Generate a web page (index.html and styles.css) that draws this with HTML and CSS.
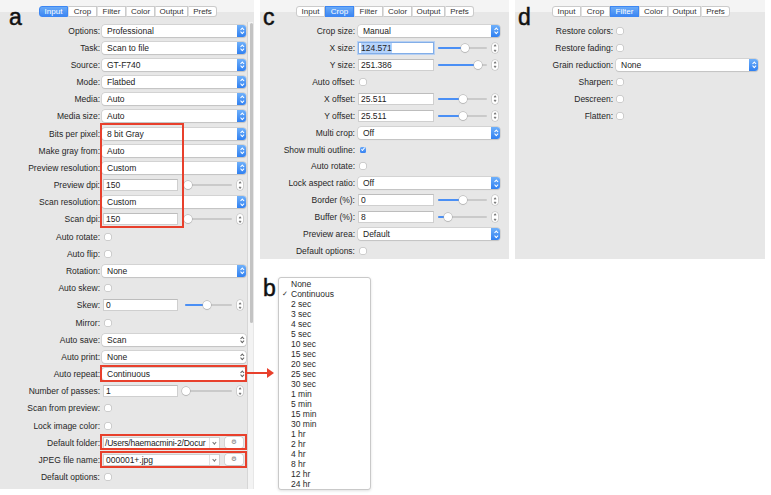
FILE: index.html
```html
<!DOCTYPE html>
<html>
<head>
<meta charset="utf-8">
<title>Scanner settings</title>
<link rel="stylesheet" href="styles.css">
</head>
<body>
<div class="figure">

  <!-- a: Input tab -->
  <div class="panel panelA">
    <span class="tag">a</span>
    <div class="tabs tabsA">
      <span class="tab on">Input</span><span class="tab">Crop</span><span class="tab">Filter</span><span class="tab">Color</span><span class="tab wide">Output</span><span class="tab">Prefs</span>
    </div>
    <div class="body">
      <div class="rows rowsA">
        <div class="row"><span class="lbl">Options:</span><div class="popup">Professional<span class="stp"></span></div></div>
        <div class="row"><span class="lbl">Task:</span><div class="popup">Scan to file<span class="stp"></span></div></div>
        <div class="row"><span class="lbl">Source:</span><div class="popup">GT-F740<span class="stp"></span></div></div>
        <div class="row"><span class="lbl">Mode:</span><div class="popup">Flatbed<span class="stp"></span></div></div>
        <div class="row"><span class="lbl">Media:</span><div class="popup">Auto<span class="stp"></span></div></div>
        <div class="row"><span class="lbl">Media size:</span><div class="popup">Auto<span class="stp"></span></div></div>
        <div class="row"><span class="lbl">Bits per pixel:</span><div class="popup">8 bit Gray<span class="stp"></span></div></div>
        <div class="row"><span class="lbl">Make gray from:</span><div class="popup">Auto<span class="stp"></span></div></div>
        <div class="row"><span class="lbl">Preview resolution:</span><div class="popup">Custom<span class="stp"></span></div></div>
        <div class="row"><span class="lbl">Preview dpi:</span><div class="field">150</div><div class="slider"><div class="fill" style="width:7%"></div></div><span class="spin"></span></div>
        <div class="row"><span class="lbl">Scan resolution:</span><div class="popup">Custom<span class="stp"></span></div></div>
        <div class="row"><span class="lbl">Scan dpi:</span><div class="field">150</div><div class="slider"><div class="fill" style="width:7%"></div></div><span class="spin"></span></div>
        <div class="row"><span class="lbl">Auto rotate:</span><span class="cb"></span></div>
        <div class="row"><span class="lbl">Auto flip:</span><span class="cb"></span></div>
        <div class="row"><span class="lbl">Rotation:</span><div class="popup">None<span class="stp"></span></div></div>
        <div class="row"><span class="lbl">Auto skew:</span><span class="cb"></span></div>
        <div class="row"><span class="lbl">Skew:</span><div class="field">0</div><div class="slider"><div class="fill" style="width:47%"></div></div><span class="spin"></span></div>
        <div class="row"><span class="lbl">Mirror:</span><span class="cb"></span></div>
        <div class="row"><span class="lbl">Auto save:</span><div class="popup">Scan<span class="stp plain"></span></div></div>
        <div class="row"><span class="lbl">Auto print:</span><div class="popup">None<span class="stp plain"></span></div></div>
        <div class="row"><span class="lbl">Auto repeat:</span><div class="popup">Continuous<span class="stp plain"></span></div></div>
        <div class="row"><span class="lbl">Number of passes:</span><div class="field">1</div><div class="slider"><div class="fill" style="width:2%"></div></div><span class="spin"></span></div>
        <div class="row"><span class="lbl">Scan from preview:</span><span class="cb"></span></div>
        <div class="row"><span class="lbl">Lock image color:</span><span class="cb"></span></div>
        <div class="row"><span class="lbl">Default folder:</span><div class="combo"><span class="val tight">/Users/haemacmini-2/Docur</span><span class="drop"></span></div><span class="btn">&#9881;</span></div>
        <div class="row"><span class="lbl">JPEG file name:</span><div class="combo"><span class="val">000001+.jpg</span><span class="drop"></span></div><span class="btn">&#9881;</span></div>
        <div class="row"><span class="lbl">Default options:</span><span class="cb"></span></div>
      </div>
      <div class="scroll"><div class="thumb"></div></div>
    </div>
    <!-- red annotation boxes -->
    <div class="mark markBits"></div>
    <div class="mark markRepeat"></div>
    <div class="mark markFolder"></div>
    <div class="mark markJpeg"></div>
  </div>

  <div class="right">
    <div class="top">
      <!-- c: Crop tab -->
      <div class="panel panelC">
        <span class="tag">c</span>
        <div class="tabs tabsC">
          <span class="tab">Input</span><span class="tab on">Crop</span><span class="tab">Filter</span><span class="tab">Color</span><span class="tab wide">Output</span><span class="tab">Prefs</span>
        </div>
        <div class="rows rowsC">
          <div class="row"><span class="lbl">Crop size:</span><div class="popup">Manual<span class="stp"></span></div></div>
          <div class="row"><span class="lbl">X size:</span><div class="field focus"><span class="sel">124.571</span></div><div class="slider"><div class="fill" style="width:55%"></div></div><span class="spin"></span></div>
          <div class="row"><span class="lbl">Y size:</span><div class="field">251.386</div><div class="slider"><div class="fill" style="width:81%"></div></div><span class="spin"></span></div>
          <div class="row"><span class="lbl">Auto offset:</span><span class="cb"></span></div>
          <div class="row"><span class="lbl">X offset:</span><div class="field">25.511</div><div class="slider"><div class="fill" style="width:52%"></div></div><span class="spin"></span></div>
          <div class="row"><span class="lbl">Y offset:</span><div class="field">25.511</div><div class="slider"><div class="fill" style="width:52%"></div></div><span class="spin"></span></div>
          <div class="row"><span class="lbl">Multi crop:</span><div class="popup">Off<span class="stp"></span></div></div>
          <div class="row"><span class="lbl">Show multi outline:</span><span class="cb checked"></span></div>
          <div class="row"><span class="lbl">Auto rotate:</span><span class="cb"></span></div>
          <div class="row"><span class="lbl">Lock aspect ratio:</span><div class="popup">Off<span class="stp"></span></div></div>
          <div class="row"><span class="lbl">Border (%):</span><div class="field">0</div><div class="slider"><div class="fill" style="width:50%"></div></div><span class="spin"></span></div>
          <div class="row"><span class="lbl">Buffer (%):</span><div class="field">8</div><div class="slider"><div class="fill" style="width:20%"></div></div><span class="spin"></span></div>
          <div class="row"><span class="lbl">Preview area:</span><div class="popup">Default<span class="stp"></span></div></div>
          <div class="row"><span class="lbl">Default options:</span><span class="cb"></span></div>
        </div>
      </div>

      <!-- d: Filter tab -->
      <div class="panel panelD">
        <span class="tag">d</span>
        <div class="tabs tabsD">
          <span class="tab">Input</span><span class="tab">Crop</span><span class="tab on">Filter</span><span class="tab">Color</span><span class="tab wide">Output</span><span class="tab">Prefs</span>
        </div>
        <div class="rows rowsD">
          <div class="row"><span class="lbl">Restore colors:</span><span class="cb"></span></div>
          <div class="row"><span class="lbl">Restore fading:</span><span class="cb"></span></div>
          <div class="row"><span class="lbl">Grain reduction:</span><div class="popup">None<span class="stp"></span></div></div>
          <div class="row"><span class="lbl">Sharpen:</span><span class="cb"></span></div>
          <div class="row"><span class="lbl">Descreen:</span><span class="cb"></span></div>
          <div class="row"><span class="lbl">Flatten:</span><span class="cb"></span></div>
        </div>
      </div>
    </div>

    <!-- b: Auto repeat menu -->
    <div class="lower">
      <span class="tagB">b</span>
      <ul class="menu">
        <li>None</li>
        <li class="on">Continuous</li>
        <li>2 sec</li>
        <li>3 sec</li>
        <li>4 sec</li>
        <li>5 sec</li>
        <li>10 sec</li>
        <li>15 sec</li>
        <li>20 sec</li>
        <li>25 sec</li>
        <li>30 sec</li>
        <li>1 min</li>
        <li>5 min</li>
        <li>15 min</li>
        <li>30 min</li>
        <li>1 hr</li>
        <li>2 hr</li>
        <li>4 hr</li>
        <li>8 hr</li>
        <li>12 hr</li>
        <li>24 hr</li>
      </ul>
    </div>
  </div>

  <!-- arrow from Auto repeat to the menu -->
  <div class="arrow"></div>
</div>
</body>
</html>
```

FILE: styles.css
```css
body {
  margin: 0;
  background: #fff;
  font-family: "Liberation Sans", Arial, sans-serif;
  color: #222;
}

.figure {
  position: relative;
  display: flex;
  width: 771px;
  height: 495px;
}

/* panels */
.panel {
  position: relative;
  background: linear-gradient(#f4f4f4 0, #f4f4f4 12px, #e7e7e7 12px);
  box-sizing: border-box;
}
.panelA { width: 254px; height: 489px; }
.panelC { width: 249px; height: 259px; }
.panelD { width: 250px; height: 259px; margin-left: 6px; }

.right { margin-left: 6px; }
.top { display: flex; }

.tag {
  position: absolute;
  left: 9px;
  top: 6px;
  font-size: 23px;
  line-height: 23px;
  color: #111;
  -webkit-text-stroke: 0.5px #111;
}
.panelC .tag { left: 3px; }
.panelD .tag { left: 3px; }

/* tab strip */
.tabs {
  display: flex;
  height: 11px;
  margin-top: 6px;
}
.tabsA { margin-left: 39px; }
.tabsC { margin-left: 36px; }
.tabsD { margin-left: 37px; }
.tab {
  width: 29px;
  box-sizing: border-box;
  text-align: center;
  font-size: 8px;
  line-height: 9px;
  background: #fff;
  border: 1px solid #cbcbcb;
  border-left: 1px solid #e0e0e0;
  color: #333;
}
.tab:first-child { border-left-color: #cbcbcb; border-radius: 3px 0 0 3px; }
.tab:last-child { border-radius: 0 3px 3px 0; }
.tab.wide { width: 33px; }
.tab.on {
  background: linear-gradient(#69aaf7, #3d87f3);
  border-color: #3d87f3;
  color: #fff;
}

/* rows */
.body { display: flex; margin-top: 5px; }
.rows { font-size: 8.5px; }
.rowsA { width: 247px; }
.rowsC { margin-top: 5.5px; }
.rowsD { margin-top: 5.5px; }
.row {
  display: flex;
  align-items: center;
  height: 17.18px;
}
.rowsC .row { height: 16.95px; }
.rowsD .row { height: 17px; }

.lbl {
  flex: none;
  width: 100px;
  text-align: right;
  color: #262626;
  white-space: nowrap;
}
.rowsC .lbl { width: 95px; }
.rowsD .lbl { width: 98px; }

/* popup buttons */
.popup {
  position: relative;
  box-sizing: border-box;
  width: 144px;
  height: 12px;
  margin-left: 2px;
  padding-left: 5px;
  line-height: 12px;
  background: #fff;
  border-radius: 3px;
  box-shadow: 0 0 0 0.5px #c2c2c2, 0 0.5px 1px rgba(0, 0, 0, 0.15);
}
.rowsC .popup { width: 142px; margin-left: 3px; }
.rowsD .popup { width: 142px; margin-left: 3px; }

.stp {
  position: absolute;
  right: 0;
  top: 0;
  width: 9px;
  height: 12px;
  border-radius: 0 3px 3px 0;
  background: linear-gradient(#6fb0fa, #3080f1);
}
.stp::before,
.stp::after {
  content: "";
  position: absolute;
  left: 3.5px;
  width: 1.6px;
  height: 1.6px;
  border: solid #fff;
  border-width: 0.8px 0 0 0.8px;
}
.stp::before { top: 3px; transform: rotate(45deg); }
.stp::after { bottom: 3px; transform: rotate(225deg); }
.stp.plain { background: none; }
.stp.plain::before,
.stp.plain::after { border-color: #666; }

/* text fields */
.field {
  box-sizing: border-box;
  width: 75px;
  height: 12px;
  margin-left: 3px;
  padding-left: 2px;
  line-height: 11px;
  background: #fff;
  border: 0.5px solid #cfcfcf;
  border-top-color: #bdbdbd;
}
.rowsC .field { width: 76px; }
.field.focus {
  border: 1px solid #82aee8;
  box-shadow: 0 0 0 1px #b7d0f2;
  line-height: 10px;
}
.sel { background: #b5d3fb; }

/* sliders */
.slider {
  flex: none;
  width: 47px;
  height: 2px;
  margin-left: 7px;
  background: #cacaca;
  border-radius: 1px;
}
.rowsC .slider { width: 49px; margin-left: 4px; }
.fill {
  position: relative;
  height: 100%;
  background: #4a8ff5;
  border-radius: 1px;
}
.fill::after {
  content: "";
  position: absolute;
  right: -4px;
  top: -3px;
  width: 8px;
  height: 8px;
  border-radius: 50%;
  background: #fff;
  box-shadow: 0 0 0 0.5px #a9a9a9, 0 0.5px 1px rgba(0, 0, 0, 0.25);
}

/* little steppers */
.spin {
  position: relative;
  flex: none;
  width: 6px;
  height: 10px;
  margin-left: 5px;
  background: #fff;
  border-radius: 3px;
  box-shadow: 0 0 0 0.5px #b8b8b8;
}
.spin::before,
.spin::after {
  content: "";
  position: absolute;
  left: 2.2px;
  width: 1.2px;
  height: 1.2px;
  border: solid #777;
  border-width: 0.6px 0 0 0.6px;
}
.spin::before { top: 2.2px; transform: rotate(45deg); }
.spin::after { bottom: 2.2px; transform: rotate(225deg); }

/* checkboxes */
.cb {
  position: relative;
  flex: none;
  width: 6px;
  height: 6px;
  margin-left: 5px;
  background: #fff;
  border-radius: 1.5px;
  box-shadow: 0 0 0 0.5px #b3b3b3;
}
.rowsD .cb { margin-left: 4px; }
.cb.checked { background: linear-gradient(#6aa9f7, #3682f2); box-shadow: none; }
.cb.checked::after {
  content: "";
  position: absolute;
  left: 2px;
  top: 0.6px;
  width: 1.4px;
  height: 3px;
  border: solid #fff;
  border-width: 0 0.8px 0.8px 0;
  transform: rotate(40deg);
}

/* combo box + button (folder / file name) */
.combo {
  position: relative;
  display: flex;
  box-sizing: border-box;
  width: 117px;
  height: 12px;
  margin-left: 3px;
  background: #fff;
  border: 0.5px solid #cfcfcf;
  line-height: 11px;
}
.combo .val {
  flex: 1;
  overflow: hidden;
  white-space: nowrap;
  padding-left: 2px;
}
.combo .val.tight { padding-left: 1px; letter-spacing: -0.2px; }
.combo .drop {
  position: relative;
  flex: none;
  width: 9px;
  border-left: 0.5px solid #e2e2e2;
}
.combo .drop::after {
  content: "";
  position: absolute;
  left: 3px;
  top: 3.5px;
  width: 1.8px;
  height: 1.8px;
  border: solid #777;
  border-width: 0 0.7px 0.7px 0;
  transform: rotate(45deg);
}
.btn {
  flex: none;
  width: 18px;
  height: 11px;
  margin-left: 5px;
  background: #fff;
  border-radius: 2.5px;
  box-shadow: 0 0 0 0.5px #c4c4c4, 0 0.5px 1px rgba(0, 0, 0, 0.15);
  text-align: center;
  font-family: "DejaVu Sans", sans-serif;
  font-size: 6.5px;
  line-height: 11px;
  color: #777;
}

/* scroll bar of panel a */
.scroll {
  width: 6px;
  height: 467px;
  background: #f3f3f3;
  border-left: 0.5px solid #d6d6d6;
  box-sizing: border-box;
}
.thumb {
  width: 3px;
  height: 300px;
  margin: 1px 0 0 1.5px;
  border-radius: 2px;
  background: #c3c3c3;
}

/* red annotation boxes */
.mark {
  position: absolute;
  left: 100px;
  width: 147px;
  box-sizing: border-box;
  border: 2px solid #e8402c;
}
.markBits { top: 123px; width: 84px; height: 105px; }
.markRepeat { top: 365px; height: 17px; }
.markFolder { top: 434px; height: 16px; }
.markJpeg { top: 451px; height: 17px; }

.arrow {
  position: absolute;
  left: 247px;
  top: 372px;
  width: 21px;
  height: 2px;
  background: #e8402c;
}
.arrow::after {
  content: "";
  position: absolute;
  left: 20px;
  top: -4px;
  border-left: 7px solid #e8402c;
  border-top: 5px solid transparent;
  border-bottom: 5px solid transparent;
}

/* b: drop-down menu */
.lower {
  display: flex;
  margin: 18px 0 0 1px;
}
.tagB {
  width: 17px;
  font-size: 23px;
  line-height: 23px;
  color: #111;
  padding-left: 2px;
  box-sizing: border-box;
  -webkit-text-stroke: 0.5px #111;
}
.menu {
  list-style: none;
  margin: 0;
  padding: 1px 0 2px;
  width: 93px;
  height: 213px;
  box-sizing: border-box;
  background: #fff;
  border: 0.5px solid #c9c9c9;
  border-radius: 3px;
  box-shadow: 0 1px 3px rgba(0, 0, 0, 0.12);
}
.menu li {
  position: relative;
  height: 10px;
  line-height: 10px;
  padding-left: 12px;
  font-size: 8.5px;
  color: #2a2a2a;
}
.menu li.on::before {
  content: "\2713";
  position: absolute;
  left: 3px;
  font-family: "DejaVu Sans", sans-serif;
  font-size: 7px;
}
```
